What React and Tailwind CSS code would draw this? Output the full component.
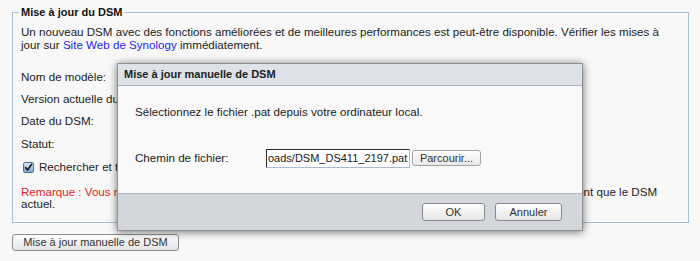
export default function App() {
  return (
    <div className="relative w-[700px] h-[261px] overflow-hidden bg-[#f8f8f8] font-['Liberation_Sans',Arial,sans-serif] text-[11.6px] leading-[12.5px] text-[#222]">
      <div className="pl-[12px] pr-[11px] pt-[6px]">
        <fieldset className="border border-[#a9bdd1] pl-[8px] pr-[8px] pt-[7px] pb-[11px]">
          <legend className="-ml-[2px] px-[2px] font-bold text-[11px] leading-[13px] text-[#111]">
            Mise à jour du DSM
          </legend>
          <p>
            Un nouveau DSM avec des fonctions améliorées et de meilleures performances est peut-être disponible. Vérifier les mises à
            <br />
            jour sur <span className="text-[#1f1fe8]">Site Web de Synology</span> immédiatement.
          </p>
          <div className="mt-[19.5px] h-[12.5px] whitespace-nowrap">Nom de modèle:</div>
          <div className="mt-[9.9px] h-[12.5px] whitespace-nowrap">Version actuelle du DSM:</div>
          <div className="mt-[9.9px] h-[12.5px] whitespace-nowrap">Date du DSM:</div>
          <div className="mt-[9.9px] h-[12.5px] whitespace-nowrap">Statut:</div>
          <div className="mt-[11px] flex items-center gap-[5px] h-[12.5px] whitespace-nowrap">
            <span className="ml-[2px] flex w-[11px] h-[11px] items-center justify-center rounded-[2px] border border-[#4f74a0] bg-gradient-to-b from-[#d9e9fa] to-[#79a9df]">
              <svg width="9" height="9" viewBox="0 0 9 9">
                <path d="M1.5 4.6 L3.6 7 L7.6 1.2" fill="none" stroke="#1b1b1b" strokeWidth="1.6" strokeLinecap="round" strokeLinejoin="round" />
              </svg>
            </span>
            <span>Rechercher et télécharger automatiquement les mises à jour du DSM</span>
          </div>
          <p className="mt-[12px]">
            <span className="text-[#ee1c25]">Remarque : Vous ne pouvez pas revenir à une version antérieure.</span> Le fichier .pat doit être au moins aussi récent que le DSM
            <br />
            actuel.
          </p>
        </fieldset>
        <button className="mt-[11px] flex h-[17px] w-[167px] items-center justify-center rounded-[3px] border border-[#8e8e8e] bg-gradient-to-b from-[#ffffff] to-[#e4e4e4] text-[11px] text-[#333]">
          Mise à jour manuelle de DSM
        </button>
      </div>

      <div className="absolute left-[117px] top-[63px] flex h-[168px] w-[466px] flex-col border border-[#8f8f8f] bg-[#f9f9f9] shadow-[0_1px_8px_rgba(0,0,0,0.55)]">
        <div className="flex h-[22px] items-center border-b border-[#a9b2bd] bg-[#dee3ea] pl-[6px] font-bold text-[11px] text-[#1c1c1c]">
          Mise à jour manuelle de DSM
        </div>
        <div className="flex-1 pl-[17px] pt-[20px]">
          <div>Sélectionnez le fichier .pat depuis votre ordinateur local.</div>
          <div className="mt-[30px] flex items-center">
            <div className="w-[131px]">Chemin de fichier:</div>
            <div className="flex h-[19px] w-[144px] items-center border border-t-[#2c2c2c] border-l-[#2c2c2c] border-r-[#a7bcd2] border-b-[#a7bcd2] bg-white pl-[1px] text-[11px] whitespace-nowrap">
              oads/DSM_DS411_2197.pat
            </div>
            <button className="ml-[2px] flex h-[16px] w-[69px] items-center justify-center rounded-[3px] border border-[#a3a3a3] bg-gradient-to-b from-[#ffffff] to-[#e9e9e9] text-[11px] text-[#333]">
              Parcourir...
            </button>
          </div>
        </div>
        <div className="flex h-[37px] items-start justify-end gap-[10px] border-t border-[#b5bac0] bg-[#d3d7dc] pr-[20px] pt-[9px]">
          <button className="flex h-[18px] w-[63px] items-center justify-center rounded-[3px] border border-[#8a8a8a] bg-gradient-to-b from-[#ffffff] to-[#e6e6e6] text-[11px] text-[#333]">
            OK
          </button>
          <button className="flex h-[18px] w-[67px] items-center justify-center rounded-[3px] border border-[#8a8a8a] bg-gradient-to-b from-[#ffffff] to-[#e6e6e6] text-[11px] text-[#333]">
            Annuler
          </button>
        </div>
      </div>
    </div>
  );
}
